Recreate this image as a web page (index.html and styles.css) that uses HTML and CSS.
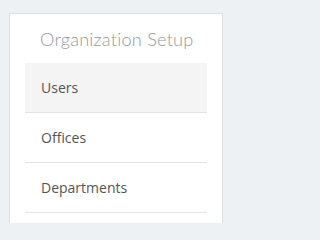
FILE: index.html
```html
<!DOCTYPE html>
<html>
<head>
<meta charset="utf-8">
<link rel="stylesheet" href="styles.css">
</head>
<body>
<div class="card">
  <h2 class="title">Organization Setup</h2>
  <ul class="menu">
    <li class="item active">Users</li>
    <li class="item">Offices</li>
    <li class="item">Departments</li>
  </ul>
</div>
</body>
</html>
```
FILE: styles.css
```css
html, body {
  margin: 0;
  padding: 0;
  background: #eef1f4;
  overflow: hidden;
}
body {
  padding: 13px 0 0 9px;
}
.card {
  box-sizing: border-box;
  width: 214px;
  height: 210px;
  background: #fff;
  border: 1px solid #dfe2e5;
  border-bottom: 0;
  padding: 0 15px;
}
.title {
  margin: 0;
  padding: 15px 0 13px 15px;
  font-family: "Lato", sans-serif;
  font-weight: 300;
  font-size: 18.2px;
  line-height: 21px;
  color: #999;
  letter-spacing: 0.2px;
  white-space: nowrap;
}
.menu {
  list-style: none;
  margin: 0;
  padding: 0;
}
.item {
  font-family: "Open Sans", sans-serif;
  font-size: 14px;
  line-height: 19px;
  color: #555;
  padding: 15px 16px;
  border-bottom: 1px solid #e4e4e4;
}
.item.active {
  background: #f4f4f4;
}
```
